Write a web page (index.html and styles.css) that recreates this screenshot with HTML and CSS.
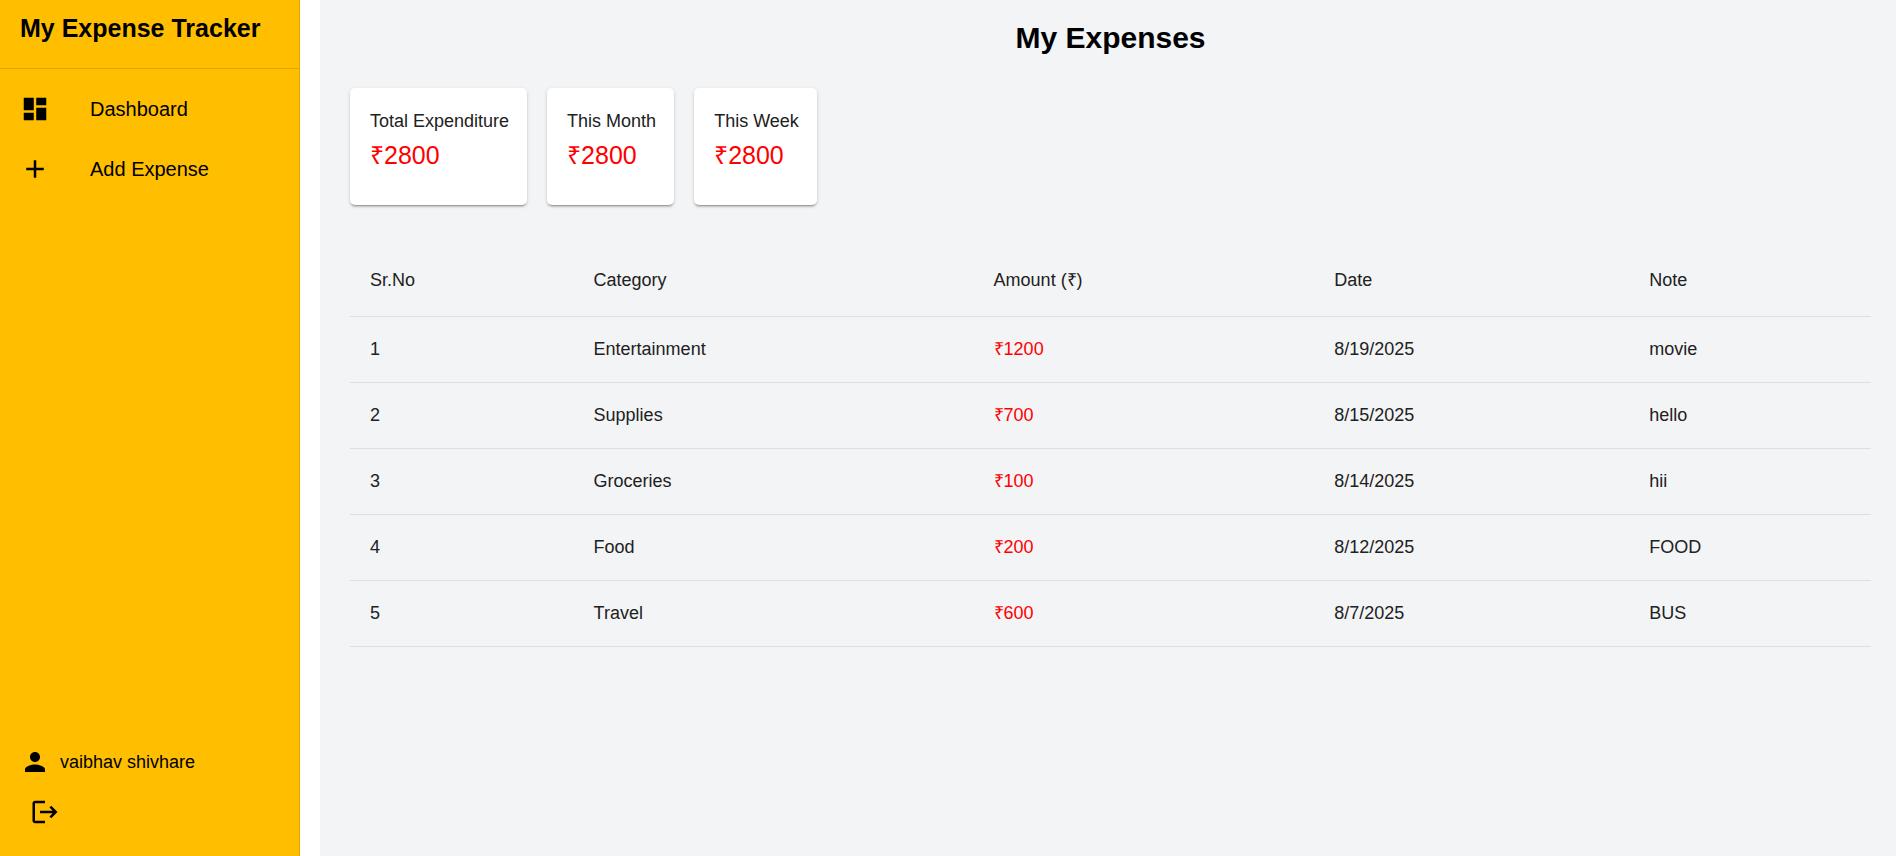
FILE: index.html
```html
<!DOCTYPE html>
<html lang="en">
<head>
<meta charset="utf-8">
<title>My Expense Tracker</title>
<link rel="stylesheet" href="styles.css">
</head>
<body>
<div class="app">
  <aside class="sidebar">
    <div class="brand">My Expense Tracker</div>
    <nav class="nav">
      <a class="nav-item" href="#dashboard">
        <svg class="icon" viewBox="0 0 24 24" aria-hidden="true"><path d="M3 13h8V3H3zm0 8h8v-6H3zm10 0h8V11h-8zm0-18v6h8V3z"/></svg>
        <span>Dashboard</span>
      </a>
      <a class="nav-item" href="#add">
        <svg class="icon" viewBox="0 0 24 24" aria-hidden="true"><path d="M19 13h-6v6h-2v-6H5v-2h6V5h2v6h6z"/></svg>
        <span>Add Expense</span>
      </a>
    </nav>
    <div class="account">
      <div class="user">
        <svg class="icon" viewBox="0 0 24 24" aria-hidden="true"><path d="M12 12c2.21 0 4-1.79 4-4s-1.79-4-4-4-4 1.79-4 4 1.79 4 4 4m0 2c-2.67 0-8 1.34-8 4v2h16v-2c0-2.66-5.33-4-8-4"/></svg>
        <span>vaibhav shivhare</span>
      </div>
      <button class="logout" type="button" aria-label="Log out">
        <svg class="icon" viewBox="0 0 24 24" aria-hidden="true"><path d="m17 7-1.41 1.41L18.17 11H8v2h10.17l-2.58 2.58L17 17l5-5zM4 5h8V3H4c-1.1 0-2 .9-2 2v14c0 1.1.9 2 2 2h8v-2H4z"/></svg>
      </button>
    </div>
  </aside>
  <main class="main">
    <h1 class="title">My Expenses</h1>
    <section class="cards">
      <div class="card"><div class="card-label">Total Expenditure</div><div class="card-value">₹2800</div></div>
      <div class="card"><div class="card-label">This Month</div><div class="card-value">₹2800</div></div>
      <div class="card"><div class="card-label">This Week</div><div class="card-value">₹2800</div></div>
    </section>
    <table class="expenses">
      <colgroup><col class="col-no"><col class="col-category"><col class="col-amount"><col class="col-date"><col class="col-note"></colgroup>
      <thead>
        <tr><th scope="col">Sr.No</th><th scope="col">Category</th><th scope="col">Amount (₹)</th><th scope="col">Date</th><th scope="col">Note</th></tr>
      </thead>
      <tbody>
        <tr><td>1</td><td>Entertainment</td><td class="amount">₹1200</td><td>8/19/2025</td><td>movie</td></tr>
        <tr><td>2</td><td>Supplies</td><td class="amount">₹700</td><td>8/15/2025</td><td>hello</td></tr>
        <tr><td>3</td><td>Groceries</td><td class="amount">₹100</td><td>8/14/2025</td><td>hii</td></tr>
        <tr><td>4</td><td>Food</td><td class="amount">₹200</td><td>8/12/2025</td><td>FOOD</td></tr>
        <tr><td>5</td><td>Travel</td><td class="amount">₹600</td><td>8/7/2025</td><td>BUS</td></tr>
      </tbody>
    </table>
  </main>
</div>
</body>
</html>
```
FILE: styles.css
```css
* {
  box-sizing: border-box;
}

body {
  margin: 0;
  background: #fff;
  color: #000;
  font-family: "Liberation Sans", Arial, sans-serif;
  font-size: 18px;
  line-height: 26px;
}

.app {
  display: flex;
  gap: 20px;
  min-height: 100vh;
}

.sidebar {
  display: flex;
  flex-direction: column;
  flex: 0 0 300px;
  background: #ffbf00;
  border-right: 1px solid #dfa700;
}

.brand {
  padding: 8px 20px 20px;
  border-bottom: 1px solid #dfa700;
  font-size: 25px;
  font-weight: 700;
  line-height: 40px;
}

.nav {
  flex: 1;
  padding: 10px 0;
}

.nav-item {
  display: flex;
  align-items: center;
  gap: 40px;
  padding: 15px 20px;
  color: inherit;
  font-size: 20px;
  line-height: 30px;
  text-decoration: none;
}

.icon {
  display: block;
  flex: none;
  width: 30px;
  height: 30px;
  fill: currentColor;
}

.account {
  padding: 20px 20px 19px;
}

.user {
  display: flex;
  align-items: center;
  gap: 10px;
  margin-bottom: 10px;
}

.logout {
  padding: 10px;
  border: 0;
  background: none;
  color: inherit;
  cursor: pointer;
}

.main {
  flex: 1;
  padding: 20px 25px 20px 30px;
  background: #f3f4f6;
}

.title {
  margin: 0 0 32px;
  font-size: 30px;
  line-height: 36px;
  text-align: center;
}

.cards {
  display: flex;
  gap: 20px;
  margin-bottom: 40px;
  color: #212121;
}

.card {
  padding: 20px 18px 28px 20px;
  border-radius: 5px;
  background: #fff;
  box-shadow: 0 3px 1px -2px rgba(0, 0, 0, 0.2), 0 2px 2px rgba(0, 0, 0, 0.14), 0 1px 4px rgba(0, 0, 0, 0.12);
}

.card-label {
  line-height: 26px;
}

.card-value {
  color: #f00;
  font-size: 25px;
  line-height: 43px;
}

.expenses {
  width: 100%;
  border-collapse: collapse;
  table-layout: fixed;
  color: #212121;
}

.col-no {
  width: 14.7%;
}

.col-category {
  width: 26.3%;
}

.col-amount {
  width: 22.4%;
}

.col-date {
  width: 20.7%;
}

.expenses th,
.expenses td {
  height: 66px;
  padding: 0 20px;
  border-bottom: 1px solid #dcdee0;
  font-weight: 400;
  text-align: left;
}

.expenses th {
  height: 71px;
}

.expenses .amount {
  color: #f00;
}
```
